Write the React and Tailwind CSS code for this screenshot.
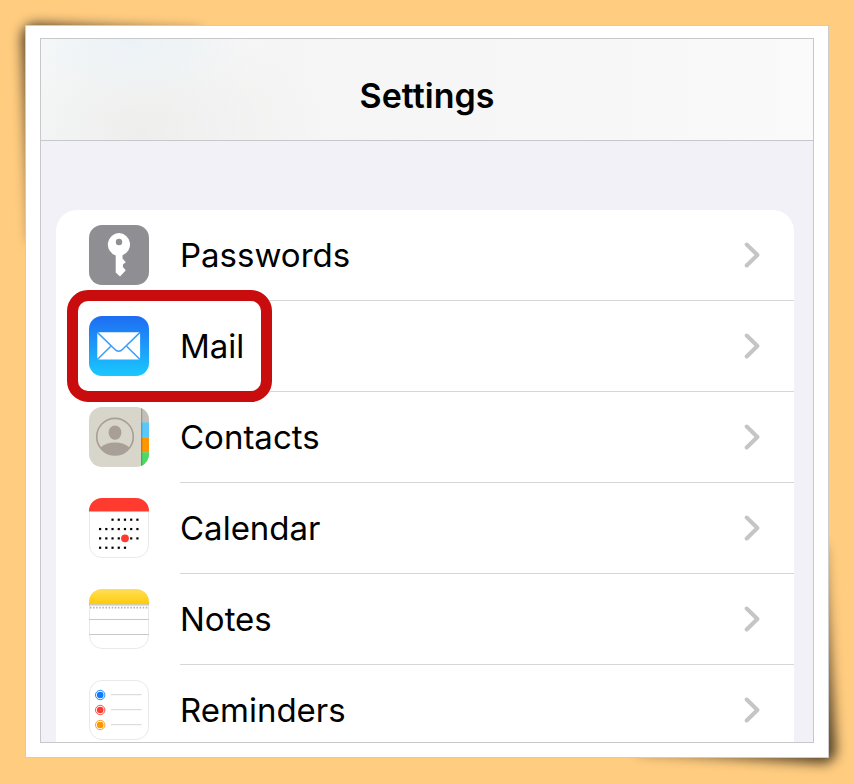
import React from 'react';
import clsx from 'clsx';

// --- ICONS ---

const Key = () => (
  <svg viewBox="0 0 60 60" className="size-full" aria-hidden="true">
    <rect width="60" height="60" rx="13" fill="#8e8e93" />
    <path
      fill="#fff"
      fillRule="evenodd"
      d="M30 8a11.5 11.5 0 0 0-3.3 22.4v17.1l4.3 4 5.8-6.3-2.9-3.3v-2.4l2.9-2.3-3.3-3.7v-3.2A11.5 11.5 0 0 0 30 8Zm0 5.8a3.2 3.2 0 1 1 0 6.4 3.2 3.2 0 0 1 0-6.4Z"
    />
  </svg>
);

const Envelope = () => (
  <svg viewBox="0 0 60 60" className="size-full" aria-hidden="true">
    <defs>
      <linearGradient id="mail-bg" x1="0" y1="0" x2="0" y2="1">
        <stop offset="0" stopColor="#1e6cf2" />
        <stop offset="1" stopColor="#1ac8fe" />
      </linearGradient>
    </defs>
    <rect width="60" height="60" rx="13" fill="url(#mail-bg)" />
    <rect x="8.3" y="16.3" width="42.8" height="27.2" rx="1.5" fill="#fff" />
    <g fill="none" stroke="#3a9df8" strokeWidth="1.5">
      <path d="M8.6 16.6 25.5 33q4.2 4.6 8.4 0L50.8 16.6" />
      <path d="M8.6 43.2 21.8 30.2M50.8 43.2 37.6 30.2" />
    </g>
  </svg>
);

const Person = () => (
  <svg viewBox="0 0 60 60" className="size-full" aria-hidden="true">
    <defs>
      <clipPath id="contacts-box"><rect width="60" height="60" rx="13" /></clipPath>
      <clipPath id="contacts-face"><circle cx="26" cy="29.7" r="18" /></clipPath>
      <linearGradient id="contacts-shade">
        <stop offset="0" stopColor="#000" stopOpacity=".25" />
        <stop offset="1" stopColor="#000" stopOpacity="0" />
      </linearGradient>
    </defs>
    <g clipPath="url(#contacts-box)">
      <rect width="60" height="60" fill="#d8d5cb" />
      <rect x="52" width="8" height="15.3" fill="#c3bfb6" />
      <rect x="52" y="15.3" width="8" height="15" fill="#5ac8fa" />
      <rect x="52" y="30.3" width="8" height="15" fill="#ff9500" />
      <rect x="52" y="45.3" width="8" height="15" fill="#4cd964" />
      <rect x="52" width="2" height="60" fill="url(#contacts-shade)" />
    </g>
    <circle cx="26" cy="29.7" r="18.3" fill="none" stroke="#a79f98" strokeWidth="1.6" />
    <ellipse cx="26" cy="25.6" rx="6.4" ry="7.2" fill="#a79f98" />
    <path clipPath="url(#contacts-face)" fill="#a79f98" d="M11 41c4-3.6 9-5.4 15-5.4S37 37.4 41 41v9H11Z" />
  </svg>
);

// first and last column holding a day, for each week
const WEEKS = [[2, 6], [0, 6], [0, 6], [0, 4]];

const CalendarPage = () => (
  <svg viewBox="0 0 60 60" className="size-full" aria-hidden="true">
    <defs>
      <clipPath id="calendar-box"><rect width="60" height="60" rx="13" /></clipPath>
    </defs>
    <rect x=".5" y=".5" width="59" height="59" rx="12.5" fill="#fff" stroke="#e9e9eb" />
    <rect width="60" height="13.5" fill="#ff3b30" clipPath="url(#calendar-box)" />
    {WEEKS.map(([from, to], week) =>
      [0, 1, 2, 3, 4, 5, 6]
        .filter((day) => day >= from && day <= to)
        .map((day) => (
          <rect key={`${week}-${day}`} x={10 + day * 6.22} y={20.6 + week * 9.35} width="2.2" height="2.2" />
        ))
    )}
    <circle cx="36" cy="40.3" r="3.9" fill="#ff3b30" />
  </svg>
);

const Notepad = () => (
  <svg viewBox="0 0 60 60" className="size-full" aria-hidden="true">
    <defs>
      <clipPath id="notes-box"><rect width="60" height="60" rx="13" /></clipPath>
      <linearGradient id="notes-top" x1="0" y1="0" x2="0" y2="1">
        <stop offset="0" stopColor="#ffdf5a" />
        <stop offset="1" stopColor="#fecb08" />
      </linearGradient>
    </defs>
    <rect x=".5" y=".5" width="59" height="59" rx="12.5" fill="#fff" stroke="#e9e9eb" />
    <g clipPath="url(#notes-box)">
      <rect width="60" height="15.3" fill="url(#notes-top)" />
      <path stroke="#c4c0b4" strokeWidth="1.2" d="M0 15.9h60" />
      <path stroke="#b3b3b5" strokeWidth="1.6" strokeDasharray="1.5 1.6" d="M1 18.6h60" />
      <path stroke="#c9c9cb" strokeWidth="1" d="M0 30.5h60M0 45.5h60" />
    </g>
  </svg>
);

const REMINDER_DOTS = [
  { y: 15, color: '#0a7aff' },
  { y: 30, color: '#ff3b30' },
  { y: 45, color: '#ff9500' },
];

const Checklist = () => (
  <svg viewBox="0 0 60 60" className="size-full" aria-hidden="true">
    <rect x=".5" y=".5" width="59" height="59" rx="12.5" fill="#fff" stroke="#e9e9eb" />
    {REMINDER_DOTS.map(({ y, color }) => (
      <g key={y}>
        <circle cx="11.2" cy={y} r="4.7" fill="none" stroke={color} strokeWidth=".9" />
        <circle cx="11.2" cy={y} r="3.3" fill={color} />
        <path stroke="#dcdcde" strokeWidth="1.2" d={`M22 ${y - 0.4}h30.5`} />
      </g>
    ))}
  </svg>
);

const Chevron = () => (
  <svg viewBox="0 0 16 26" className="h-[26px] w-4" aria-hidden="true">
    <path
      d="M2.7 2.5 13.4 13 2.7 23.5"
      fill="none"
      stroke="#c5c5c7"
      strokeWidth="4"
      strokeLinecap="round"
      strokeLinejoin="round"
    />
  </svg>
);

const ITEMS = [
  { label: 'Passwords', Icon: Key },
  { label: 'Mail', Icon: Envelope, highlighted: true },
  { label: 'Contacts', Icon: Person },
  { label: 'Calendar', Icon: CalendarPage },
  { label: 'Notes', Icon: Notepad },
  { label: 'Reminders', Icon: Checklist },
];

function SettingsRow({ label, Icon, highlighted, last }) {
  return (
    <li className="relative">
      <a href={`#${label.toLowerCase()}`} className="flex gap-[31px] pl-[33px]">
        <span className={clsx('size-[60px] shrink-0 mt-[15px]', last ? 'mb-[2px]' : 'mb-4')}>
          <Icon />
        </span>
        <span
          className={clsx(
            'flex flex-1 items-center justify-between pr-[34px]',
            last ? 'pt-[13px]' : 'border-b border-[#d6d6d8]'
          )}
        >
          <span className="text-[33px] leading-10">{label}</span>
          <Chevron />
        </span>
      </a>
      {highlighted && (
        <div className="pointer-events-none absolute -top-[11px] left-[11px] z-10 h-28 w-[205px] rounded-[21px] border-[11px] border-[#c90d0f]" />
      )}
    </li>
  );
}

export default function App() {
  return (
    <div className="flex min-h-screen bg-[#ffcc80] p-[25px] font-['Inter','Liberation_Sans',sans-serif] text-black">
      <div className="relative flex flex-1">
        {/* curled corner shadows */}
        <div className="absolute left-1 top-1 h-[220px] w-[180px] origin-bottom-right skew-x-2 skew-y-2 rounded-tl-2xl bg-linear-to-br from-black/70 to-transparent blur-[6px]" />
        <div className="absolute bottom-1 right-1 h-[220px] w-[200px] origin-top-left skew-x-3 skew-y-3 rounded-br-2xl bg-linear-to-tl from-black/70 to-transparent blur-[6px]" />

        <div className="relative flex flex-1 border border-[#cccccc] bg-white px-[14px] pb-[14px] pt-3">
          <main className="flex flex-1 flex-col border border-[#c8c8ca] bg-[#f2f1f7]">
            <header className="flex h-[102px] items-center justify-center border-b border-[#c8c8ca] bg-[radial-gradient(ellipse_110px_60px_at_90px_0px,#ebf2f6,transparent),radial-gradient(ellipse_180px_110px_at_100px_90px,#eeeeed,transparent),linear-gradient(to_right,#f7f9fa,#f5f5f5_30%,#f7f7f7_70%,#fafafa)] pt-3">
              <h1 className="text-[34px] font-semibold leading-10">Settings</h1>
            </header>
            <ul className="ml-[15px] mr-[19px] mt-[69px] flex-1 rounded-t-[21px] bg-white">
              {ITEMS.map((item, i) => (
                <SettingsRow key={item.label} {...item} last={i === ITEMS.length - 1} />
              ))}
            </ul>
          </main>
        </div>
      </div>
    </div>
  );
}
